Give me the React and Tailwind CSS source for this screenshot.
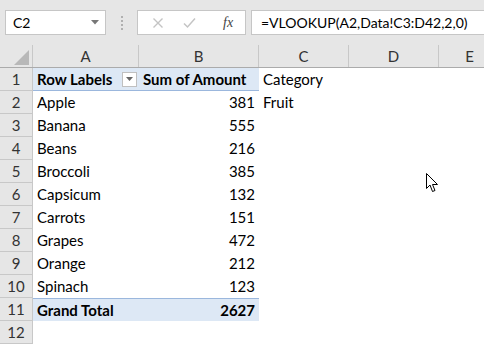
import React from 'react'

const cols = [
  { key: 'A', w: 'w-[106px]' },
  { key: 'B', w: 'w-[120px]' },
  { key: 'C', w: 'w-[90px]' },
  { key: 'D', w: 'w-[90px]' },
  { key: 'E', w: 'w-[62px]' },
]

const items = [
  ['Apple', 381],
  ['Banana', 555],
  ['Beans', 216],
  ['Broccoli', 385],
  ['Capsicum', 132],
  ['Carrots', 151],
  ['Grapes', 472],
  ['Orange', 212],
  ['Spinach', 123],
]

function RowHead({ n }) {
  return (
    <div className="flex h-[23px] w-[33px] shrink-0 items-center justify-center border-b border-r border-[#c8c8c8] bg-[#e6e6e6] text-[15px] text-[#333]">
      {n}
    </div>
  )
}

function FilterButton() {
  return (
    <span className="ml-auto mr-[2px] flex h-[15px] w-[15px] items-center justify-center border border-[#c0c0c0] bg-white">
      <svg width="7" height="4" viewBox="0 0 7 4">
        <path d="M0 0 L7 0 L3.5 4 Z" fill="#666" />
      </svg>
    </span>
  )
}

export default function App() {
  return (
    <div className="relative h-[346px] w-[484px] overflow-hidden bg-white font-['Lato','Liberation_Sans',sans-serif] text-black">
      <div className="flex h-[45px] items-center bg-[#e6e6e6] pl-[5px]">
        <div className="flex h-[25px] w-[101px] items-center border border-[#c6c6c6] bg-white pl-[7px] pr-[6px] text-[14px]">
          <span>C2</span>
          <svg className="ml-auto" width="8" height="5" viewBox="0 0 8 5">
            <path d="M0 0 L8 0 L4 4.5 Z" fill="#777" />
          </svg>
        </div>
        <div className="flex w-[31px] flex-col items-center gap-[2px]">
          <span className="h-[2px] w-[2px] bg-[#b0b0b0]" />
          <span className="h-[2px] w-[2px] bg-[#b0b0b0]" />
          <span className="h-[2px] w-[2px] bg-[#b0b0b0]" />
          <span className="h-[2px] w-[2px] bg-[#b0b0b0]" />
        </div>
        <div className="flex h-[25px] w-[109px] items-center border border-[#c6c6c6] bg-white">
          <svg className="ml-[14px]" width="12" height="12" viewBox="0 0 12 12">
            <path d="M1.5 1.5 L10.5 10.5 M10.5 1.5 L1.5 10.5" stroke="#c4c4c4" strokeWidth="1.4" />
          </svg>
          <svg className="ml-[19px]" width="13" height="12" viewBox="0 0 13 12">
            <path d="M1 6.5 L4.5 10 L12 1.5" stroke="#c4c4c4" strokeWidth="1.5" fill="none" />
          </svg>
          <span className="ml-[27px] font-['Liberation_Serif',serif] text-[14px] italic text-[#444]">fx</span>
        </div>
        <div className="ml-[5px] flex h-[25px] flex-1 items-center border border-r-0 border-[#c6c6c6] bg-white pl-[9px] text-[14px]">
          =VLOOKUP(A2,Data!C3:D42,2,0)
        </div>
      </div>

      <div className="flex h-[23px] border-b border-[#ababab] bg-[#e6e6e6]">
        <div className="relative w-[33px] shrink-0 border-r border-[#c8c8c8]">
          <svg className="absolute bottom-[2px] right-[3px]" width="15" height="15" viewBox="0 0 15 15">
            <path d="M15 0 L15 15 L0 15 Z" fill="#b8b8b8" />
          </svg>
        </div>
        {cols.map(c => (
          <div key={c.key} className={`${c.w} flex shrink-0 items-center justify-center border-r border-[#c8c8c8] text-[15px] text-[#333]`}>
            {c.key}
          </div>
        ))}
      </div>

      <div className="flex">
        <RowHead n={1} />
        <div className="flex h-[23px] w-[226px] shrink-0 items-center border-b border-[#9bb7dd] bg-[#dde8f5] text-[15px] font-bold">
          <div className="flex w-[106px] items-center pl-[4px]">
            <span>Row Labels</span>
            <FilterButton />
          </div>
          <div className="w-[120px] pl-[4px]">Sum of Amount</div>
        </div>
        <div className="flex h-[23px] items-center pl-[4px] text-[15px]">Category</div>
      </div>

      {items.map(([name, amount], i) => (
        <div key={name} className="flex">
          <RowHead n={i + 2} />
          <div className="flex h-[23px] w-[106px] shrink-0 items-center pl-[4px] text-[15px]">{name}</div>
          <div className="flex h-[23px] w-[120px] shrink-0 items-center justify-end pr-[4px] text-[15px]">{amount}</div>
          <div className="flex h-[23px] items-center pl-[4px] text-[15px]">{i === 0 ? 'Fruit' : ''}</div>
        </div>
      ))}

      <div className="flex">
        <RowHead n={11} />
        <div className="flex h-[23px] w-[226px] shrink-0 items-center border-t border-[#9bb7dd] bg-[#dde8f5] text-[15px] font-bold">
          <div className="w-[106px] pl-[4px]">Grand Total</div>
          <div className="w-[120px] pr-[4px] text-right">2627</div>
        </div>
      </div>

      <div className="flex">
        <RowHead n={12} />
      </div>

      <svg className="absolute left-[426px] top-[173px]" width="13" height="20" viewBox="0 0 13 20">
        <path d="M0.5 0.5 L0.5 15.5 L4 12 L6.5 18.5 L9 17.5 L6.5 11.5 L11.5 11.5 Z" fill="white" stroke="black" strokeWidth="1" strokeLinejoin="round" />
      </svg>
    </div>
  )
}
